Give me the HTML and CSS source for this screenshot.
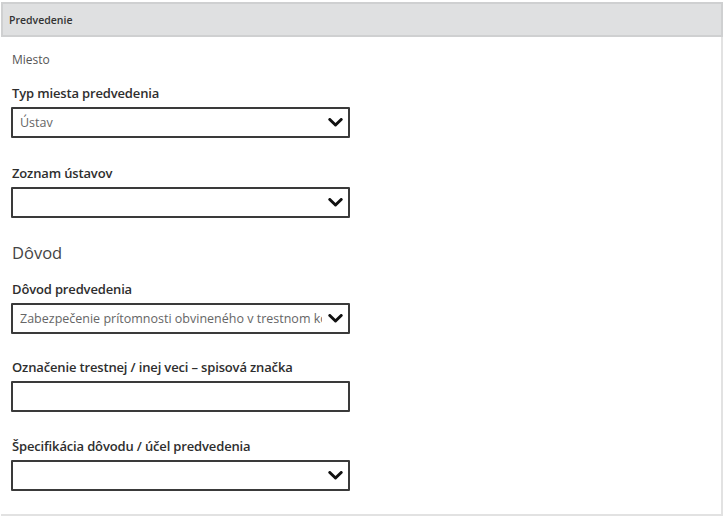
FILE: index.html
```html
<!DOCTYPE html>
<html lang="sk">
<head>
<meta charset="utf-8">
<title>Predvedenie</title>
<link rel="stylesheet" href="styles.css">
</head>
<body>
<section class="panel">
  <header class="panel-head">Predvedenie</header>
  <div class="panel-body">
    <div class="subtitle">Miesto</div>

    <div class="field first">
      <label class="label">Typ miesta predvedenia</label>
      <div class="select">
        <span class="value">Ústav</span>
        <svg class="chev" width="15" height="9" viewBox="0 0 15 9"><polyline points="1.8,1.5 7.5,7 13.2,1.5" fill="none" stroke="#111" stroke-width="3" stroke-linecap="round" stroke-linejoin="round"/></svg>
      </div>
    </div>

    <div class="field f2">
      <label class="label">Zoznam ústavov</label>
      <div class="select">
        <span class="value"></span>
        <svg class="chev" width="15" height="9" viewBox="0 0 15 9"><polyline points="1.8,1.5 7.5,7 13.2,1.5" fill="none" stroke="#111" stroke-width="3" stroke-linecap="round" stroke-linejoin="round"/></svg>
      </div>
    </div>

    <h2 class="section">Dôvod</h2>

    <div class="field after-section">
      <label class="label">Dôvod predvedenia</label>
      <div class="select">
        <span class="value">Zabezpečenie prítomnosti obvineného v trestnom konaní</span>
        <svg class="chev" width="15" height="9" viewBox="0 0 15 9"><polyline points="1.8,1.5 7.5,7 13.2,1.5" fill="none" stroke="#111" stroke-width="3" stroke-linecap="round" stroke-linejoin="round"/></svg>
      </div>
    </div>

    <div class="field f4">
      <label class="label">Označenie trestnej / inej veci – spisová značka</label>
      <div class="input"></div>
    </div>

    <div class="field f5">
      <label class="label">Špecifikácia dôvodu / účel predvedenia</label>
      <div class="select">
        <span class="value"></span>
        <svg class="chev" width="15" height="9" viewBox="0 0 15 9"><polyline points="1.8,1.5 7.5,7 13.2,1.5" fill="none" stroke="#111" stroke-width="3" stroke-linecap="round" stroke-linejoin="round"/></svg>
      </div>
    </div>
  </div>
</section>
</body>
</html>
```

FILE: styles.css
```css
html, body {
  margin: 0;
  padding: 0;
  background: #ffffff;
}

body {
  font-family: "Open Sans", Lato, "Liberation Sans", sans-serif;
  color: #333;
}

.panel {
  margin: 2px 0 0 1px;
  width: 722px;
  box-sizing: border-box;
}

.panel-head {
  height: 35px;
  box-sizing: border-box;
  border: 2px solid #cfd0d1;
  background: #dfe0e1;
  font-size: 10.5px;
  font-weight: 600;
  color: #333;
  display: flex;
  align-items: center;
  padding-left: 6px;
}

.panel-body {
  border-right: 2px solid #e2e2e2;
  border-bottom: 2px solid #e2e2e2;
  padding: 15px 0 23px 10px;
  display: flex;
  flex-direction: column;
}

.subtitle {
  font-size: 12px;
  line-height: 16px;
  color: #555;
  padding-left: 1px;
}

.field {
  display: flex;
  flex-direction: column;
  gap: 6px;
  margin-top: 27px;
}

.field.first {
  margin-top: 17px;
}

.field.after-section {
  margin-top: 17px;
}

.field.f4 {
  margin-top: 25px;
}

.field.f5 {
  margin-top: 26px;
}

.label {
  font-size: 13px;
  line-height: 16px;
  font-weight: 600;
  color: #2e2e2e;
  padding-left: 1px;
  letter-spacing: -0.15px;
}

.select, .input {
  width: 339px;
  height: 31px;
  box-sizing: border-box;
  border: 2px solid #3a3a3a;
  border-radius: 1px;
  display: flex;
  align-items: center;
  padding: 0 5px 0 7px;
  gap: 6px;
}

.value {
  flex: 1;
  min-width: 0;
  white-space: nowrap;
  overflow: hidden;
  font-size: 12.5px;
  color: #666;
}

.chev {
  flex: none;
  display: block;
}

.section {
  margin: 24px 0 0 0;
  font-size: 16.5px;
  line-height: 22px;
  font-weight: 400;
  color: #444;
  padding-left: 1px;
}
```
